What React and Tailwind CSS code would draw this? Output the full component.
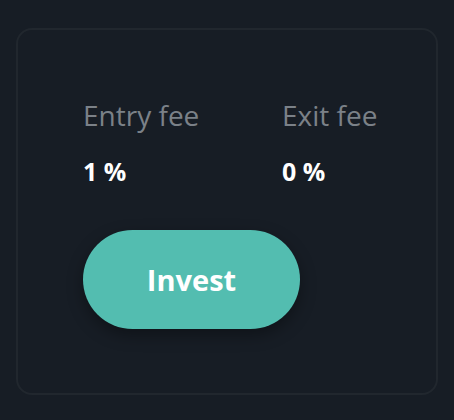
export default function App() {
  const fees = [
    { label: "Entry fee", value: "1 %" },
    { label: "Exit fee", value: "0 %" },
  ];

  return (
    <main className="min-h-screen bg-[#171d25] px-4 pt-7 pb-[25px] font-['Open_Sans',sans-serif]">
      <section className="h-[367px] rounded-2xl border-2 border-[#21272e] pl-[65px] pt-[67px]">
        <div className="grid grid-cols-[199px_1fr]">
          {fees.map((fee) => (
            <div key={fee.label}>
              <p className="text-[28px] leading-[36px] text-[#7b8188]">{fee.label}</p>
              <p className="mt-[20px] text-[25px] font-bold leading-[36px] text-white">
                {fee.value}
              </p>
            </div>
          ))}
        </div>
        <button className="mt-[41px] h-[99px] w-[217px] rounded-full bg-[#53bdb0] text-[29px] font-bold text-white shadow-[0_6px_16px_rgba(0,0,0,0.35)]">
          Invest
        </button>
      </section>
    </main>
  );
}
